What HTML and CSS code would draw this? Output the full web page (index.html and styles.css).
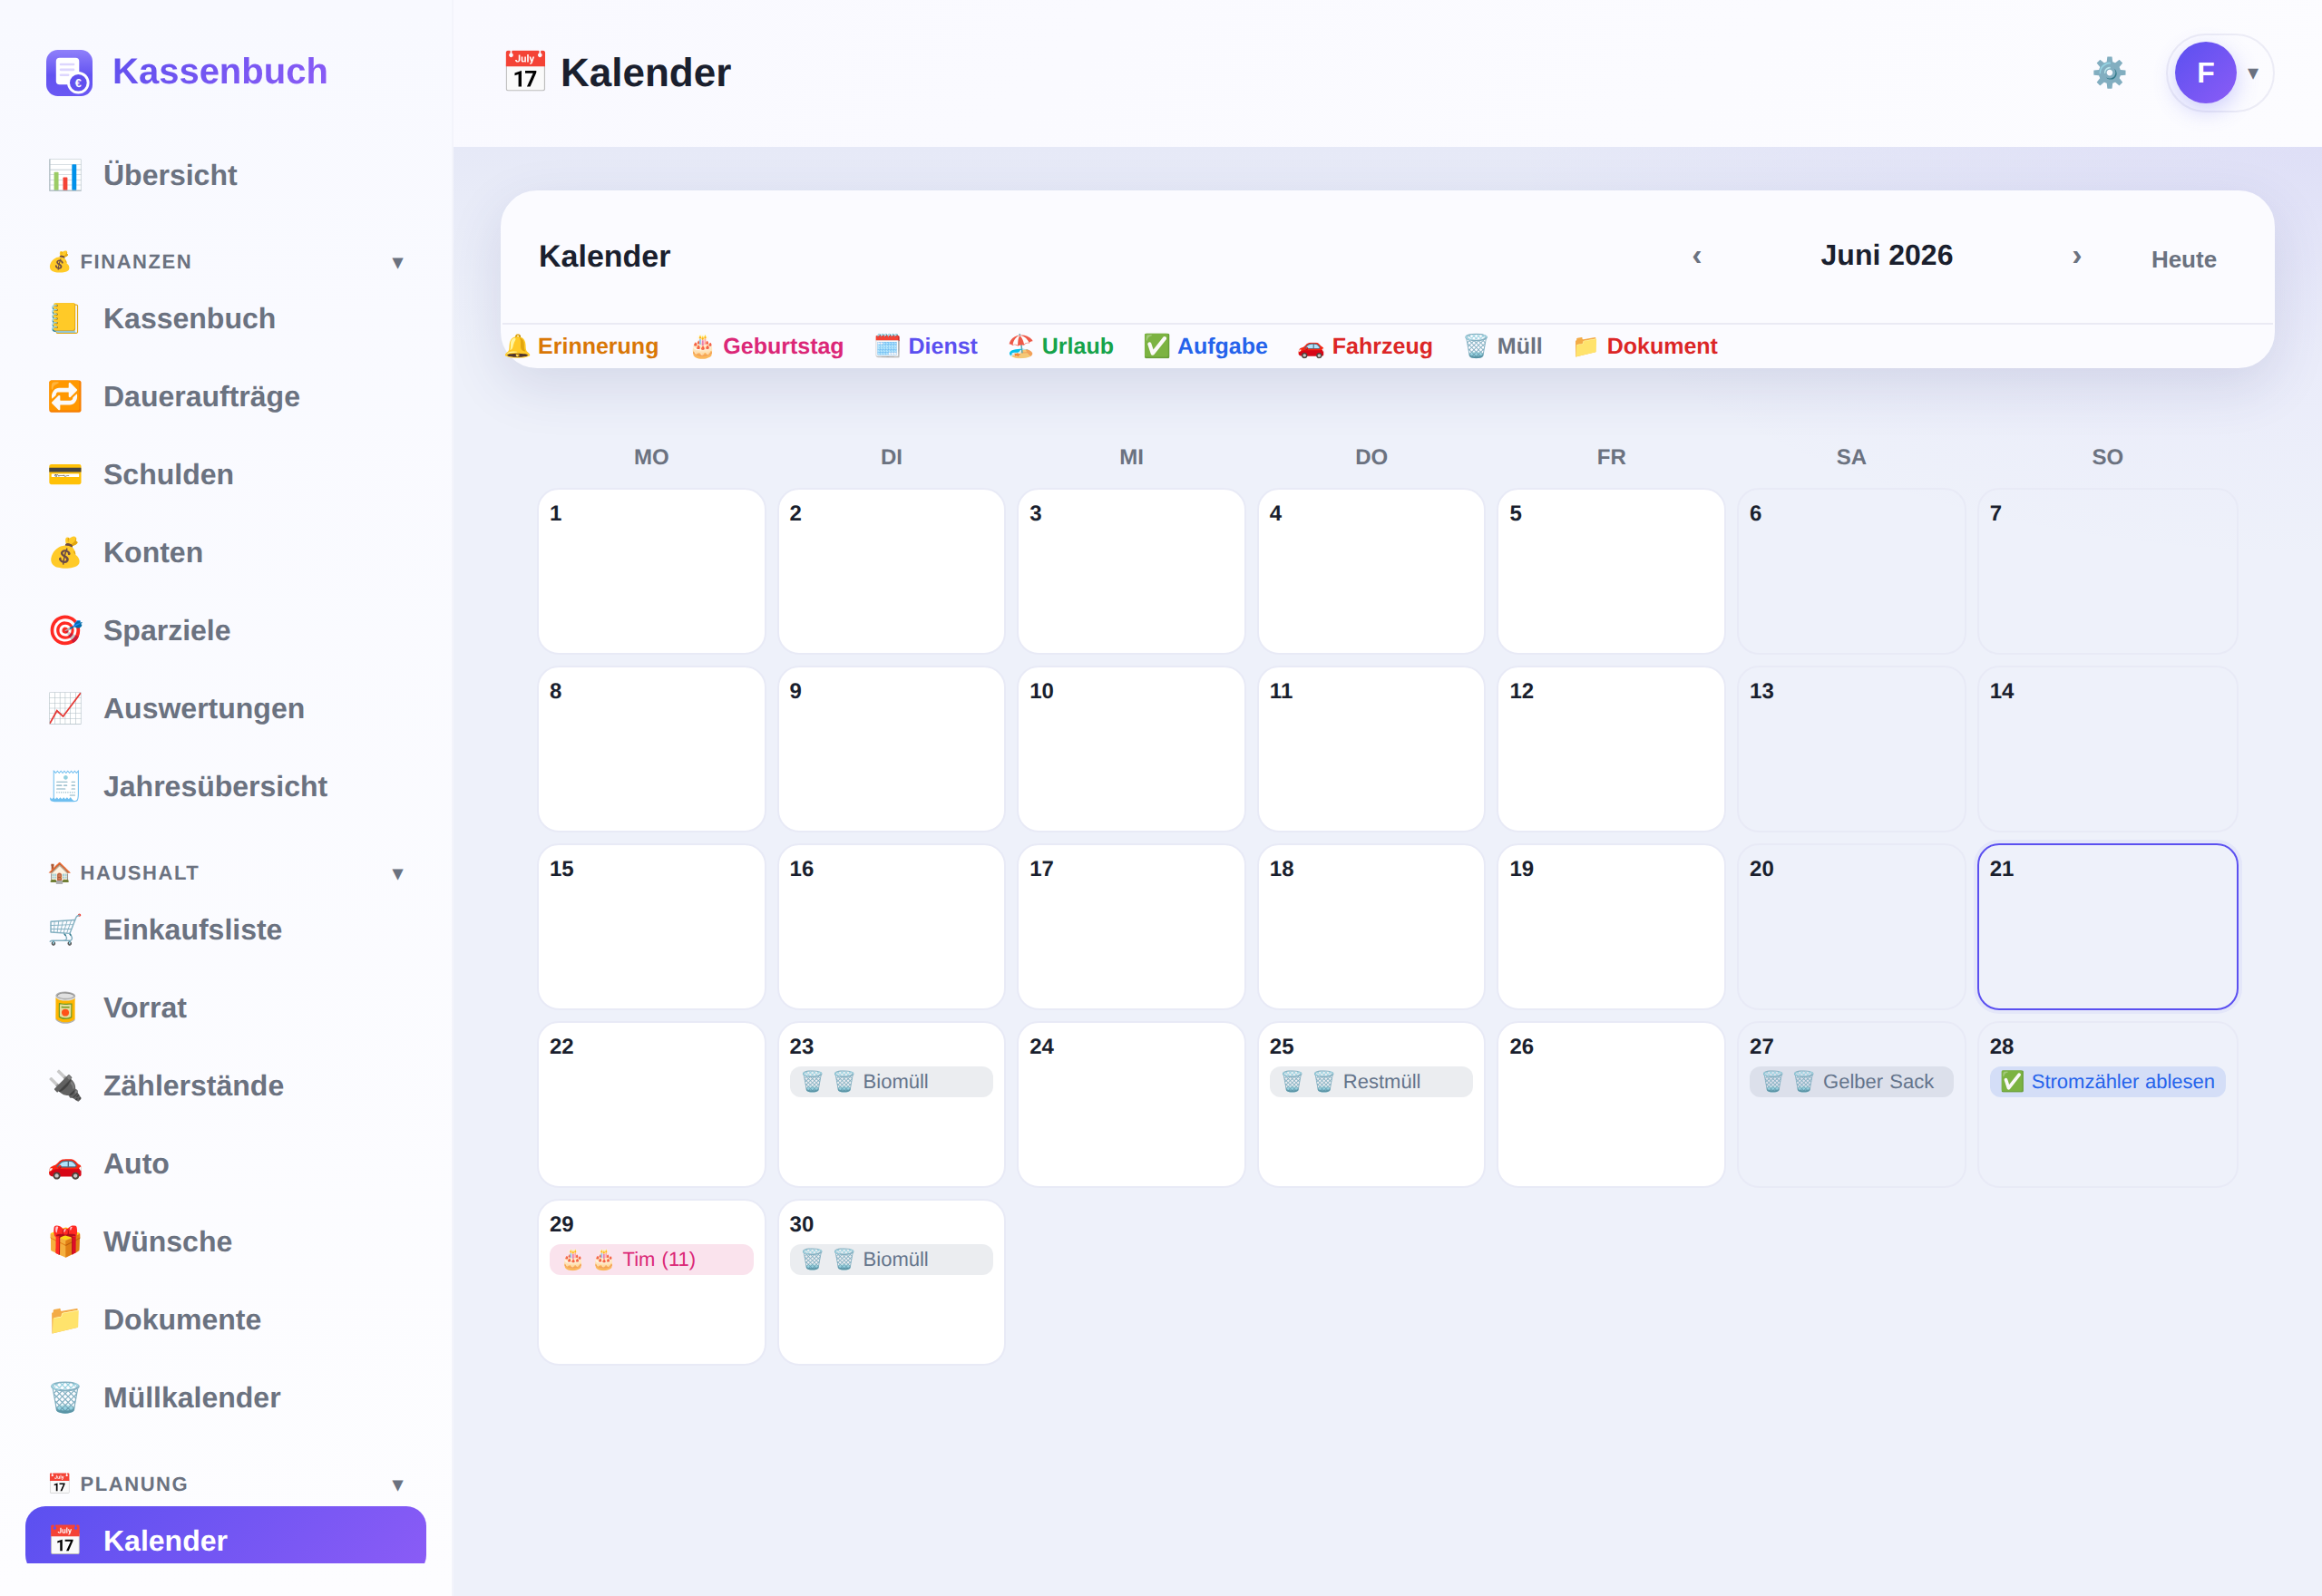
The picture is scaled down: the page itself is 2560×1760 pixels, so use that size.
FILE: index.html
```html
<!DOCTYPE html>
<html lang="de">
<head>
    <title>Kassenbuch - Kalender</title>
    <link rel="stylesheet" href="styles.css">
</head>
<body>
    <div class="app">
        <aside class="sidebar">
            <div class="brand">
                <svg class="logo" viewBox="0 0 52 52" aria-hidden="true">
                    <defs>
                        <linearGradient id="logoFill" x1="0" y1="0" x2="0" y2="1">
                            <stop offset="0" stop-color="#8f80fa"/>
                            <stop offset="0.55" stop-color="#6353f1"/>
                            <stop offset="1" stop-color="#6a58f3"/>
                        </linearGradient>
                    </defs>
                    <rect width="52" height="52" rx="13" fill="url(#logoFill)"/>
                    <rect x="11" y="9" width="26" height="30" rx="4" fill="#fff"/>
                    <rect x="15" y="15" width="17" height="2.6" rx="1.3" fill="#ddd6fe"/>
                    <rect x="15" y="21" width="17" height="2.6" rx="1.3" fill="#ddd6fe"/>
                    <rect x="15" y="27" width="11" height="2.6" rx="1.3" fill="#ddd6fe"/>
                    <circle cx="36" cy="37" r="12.5" fill="#fff"/>
                    <circle cx="36" cy="37" r="9.5" fill="#6050ee"/>
                    <text x="36" y="41.5" class="logo-euro" text-anchor="middle">€</text>
                </svg>
                <span class="brand-name">Kassenbuch</span>
            </div>

            <nav class="nav">
                <a class="nav-item"><span class="nav-icon">📊</span>Übersicht</a>

                <div class="nav-section"><span>💰 FINANZEN</span><span class="caret">▾</span></div>
                <a class="nav-item"><span class="nav-icon">📒</span>Kassenbuch</a>
                <a class="nav-item"><span class="nav-icon">🔁</span>Daueraufträge</a>
                <a class="nav-item"><span class="nav-icon">💳</span>Schulden</a>
                <a class="nav-item"><span class="nav-icon">💰</span>Konten</a>
                <a class="nav-item"><span class="nav-icon">🎯</span>Sparziele</a>
                <a class="nav-item"><span class="nav-icon">📈</span>Auswertungen</a>
                <a class="nav-item"><span class="nav-icon">🧾</span>Jahresübersicht</a>

                <div class="nav-section"><span>🏠 HAUSHALT</span><span class="caret">▾</span></div>
                <a class="nav-item"><span class="nav-icon">🛒</span>Einkaufsliste</a>
                <a class="nav-item"><span class="nav-icon">🥫</span>Vorrat</a>
                <a class="nav-item"><span class="nav-icon">🔌</span>Zählerstände</a>
                <a class="nav-item"><span class="nav-icon">🚗</span>Auto</a>
                <a class="nav-item"><span class="nav-icon">🎁</span>Wünsche</a>
                <a class="nav-item"><span class="nav-icon">📁</span>Dokumente</a>
                <a class="nav-item"><span class="nav-icon">🗑️</span>Müllkalender</a>

                <div class="nav-section"><span>📅 PLANUNG</span><span class="caret">▾</span></div>
                <a class="nav-item active"><span class="nav-icon">📅</span>Kalender</a>
            </nav>
        </aside>

        <div class="main">
            <header class="topbar">
                <h1>📅 Kalender</h1>
                <div class="topbar-right">
                    <span class="gear">⚙️</span>
                    <div class="user-menu">
                        <span class="avatar">F</span>
                        <span class="user-caret">▾</span>
                    </div>
                </div>
            </header>

            <div class="content">
                <section class="cal-card">
                    <div class="cal-head">
                        <h2>Kalender</h2>
                        <div class="cal-nav">
                            <button class="nav-btn">‹</button>
                            <span class="cal-month">Juni 2026</span>
                            <button class="nav-btn">›</button>
                            <button class="today-btn">Heute</button>
                        </div>
                    </div>
                    <div class="legend">
                        <span class="c-reminder">🔔 Erinnerung</span>
                        <span class="c-birthday">🎂 Geburtstag</span>
                        <span class="c-duty">🗓️ Dienst</span>
                        <span class="c-holiday">🏖️ Urlaub</span>
                        <span class="c-task">✅ Aufgabe</span>
                        <span class="c-car">🚗 Fahrzeug</span>
                        <span class="c-waste">🗑️ Müll</span>
                        <span class="c-doc">📁 Dokument</span>
                    </div>
                </section>

                <section class="cal-grid">
                    <div class="weekday">MO</div>
                    <div class="weekday">DI</div>
                    <div class="weekday">MI</div>
                    <div class="weekday">DO</div>
                    <div class="weekday">FR</div>
                    <div class="weekday">SA</div>
                    <div class="weekday">SO</div>

                    <div class="day"><div class="num">1</div></div>
                    <div class="day"><div class="num">2</div></div>
                    <div class="day"><div class="num">3</div></div>
                    <div class="day"><div class="num">4</div></div>
                    <div class="day"><div class="num">5</div></div>
                    <div class="day weekend"><div class="num">6</div></div>
                    <div class="day weekend"><div class="num">7</div></div>

                    <div class="day"><div class="num">8</div></div>
                    <div class="day"><div class="num">9</div></div>
                    <div class="day"><div class="num">10</div></div>
                    <div class="day"><div class="num">11</div></div>
                    <div class="day"><div class="num">12</div></div>
                    <div class="day weekend"><div class="num">13</div></div>
                    <div class="day weekend"><div class="num">14</div></div>

                    <div class="day"><div class="num">15</div></div>
                    <div class="day"><div class="num">16</div></div>
                    <div class="day"><div class="num">17</div></div>
                    <div class="day"><div class="num">18</div></div>
                    <div class="day"><div class="num">19</div></div>
                    <div class="day weekend"><div class="num">20</div></div>
                    <div class="day weekend today"><div class="num">21</div></div>

                    <div class="day"><div class="num">22</div></div>
                    <div class="day"><div class="num">23</div><div class="chip chip-waste">🗑️ 🗑️ Biomüll</div></div>
                    <div class="day"><div class="num">24</div></div>
                    <div class="day"><div class="num">25</div><div class="chip chip-waste">🗑️ 🗑️ Restmüll</div></div>
                    <div class="day"><div class="num">26</div></div>
                    <div class="day weekend"><div class="num">27</div><div class="chip chip-waste">🗑️ 🗑️ Gelber Sack</div></div>
                    <div class="day weekend"><div class="num">28</div><div class="chip chip-task">✅ Stromzähler ablesen</div></div>

                    <div class="day"><div class="num">29</div><div class="chip chip-birthday">🎂 🎂 Tim (11)</div></div>
                    <div class="day"><div class="num">30</div><div class="chip chip-waste">🗑️ 🗑️ Biomüll</div></div>
                </section>
            </div>
        </div>
    </div>
</body>
</html>
```

FILE: styles.css
```css
* { box-sizing: border-box; }
html, body { height: 100%; }
body {
    margin: 0;
    font-family: "Liberation Sans", Arial, sans-serif;
    text-rendering: geometricPrecision;
    color: #1a1f2e;
    background: #eef1fa;
    overflow: hidden;
}
.app { display: flex; height: 1760px; }

/* Sidebar */
.sidebar {
    width: 500px;
    flex: none;
    display: flex;
    flex-direction: column;
    padding-bottom: 36px;
    background: linear-gradient(180deg, #f8f9ff 0%, #fdfdff 100%);
    border-right: 2px solid #f3f4fb;
}
.brand {
    display: flex;
    align-items: center;
    gap: 22px;
    height: 155px;
    flex: none;
    padding: 54px 0 49px 51px;
}
.logo { width: 51px; height: 51px; flex: none; }
.logo-euro { font-size: 13px; font-weight: bold; fill: #fff; }
.brand-name {
    margin-top: -1px;
    font-size: 40px;
    font-weight: bold;
    background: linear-gradient(135deg, #6050ee, #8b5cf6);
    -webkit-background-clip: text;
    background-clip: text;
    color: transparent;
}
.nav { flex: 1; min-height: 0; overflow: hidden; padding: 0 28px; }
.nav-item {
    display: flex;
    align-items: center;
    gap: 22px;
    height: 76px;
    margin-bottom: 10px;
    padding-left: 24px;
    border-radius: 22px;
    font-size: 32px;
    font-weight: bold;
    color: #6b7280;
}
.nav-icon { width: 40px; text-align: center; flex: none; }
.nav-item.active {
    color: #fff;
    background: linear-gradient(135deg, #5b50f0, #8b5cf6);
}
.nav-section {
    display: flex;
    justify-content: space-between;
    align-items: center;
    height: 28px;
    margin: 44px 0 10px;
    padding: 0 26px 0 24px;
    font-size: 22px;
    font-weight: bold;
    letter-spacing: 0.07em;
    color: #6b7280;
}
.caret { letter-spacing: 0; }

/* Top bar */
.main { flex: 1; min-width: 0; display: flex; flex-direction: column; }
.topbar {
    height: 162px;
    flex: none;
    display: flex;
    align-items: center;
    justify-content: space-between;
    padding: 0 52px 2px;
    background: linear-gradient(135deg, #f9f9ff, #fcfcff);
}
.topbar h1 { margin: 0; font-size: 44px; font-weight: bold; word-spacing: -1px; }
.topbar-right { display: flex; align-items: center; gap: 42px; }
.gear { font-size: 32px; }
.user-menu {
    display: flex;
    align-items: center;
    gap: 12px;
    height: 87px;
    padding: 0 16px 0 8px;
    border: 2px solid #ececf6;
    border-radius: 44px;
}
.avatar {
    width: 68px;
    height: 68px;
    border-radius: 50%;
    display: flex;
    align-items: center;
    justify-content: center;
    font-size: 32px;
    font-weight: bold;
    color: #fff;
    background: linear-gradient(135deg, #5b50f0, #8b5cf6);
    box-shadow: 0 8px 24px rgba(99, 102, 241, 0.3);
}
.user-caret { font-size: 24px; color: #6b7280; }

/* Calendar */
.content {
    flex: 1;
    padding: 48px 52px 0;
    background:
        radial-gradient(900px 460px at 100% 0, rgba(120, 90, 240, 0.07), transparent),
        linear-gradient(180deg, #e6e9f7 0, #eef1fa 220px);
}
.cal-card {
    background: #fbfbff;
    border: 2px solid #fbfbff;
    border-radius: 40px;
    box-shadow: 0 20px 60px rgba(60, 65, 130, 0.14);
}
.cal-head {
    height: 144px;
    display: flex;
    align-items: center;
    justify-content: space-between;
    padding: 0 38px 1px 40px;
}
.cal-head h2 { margin: 0; font-size: 34px; font-weight: bold; }
.cal-nav { display: flex; align-items: center; }
.nav-btn, .today-btn {
    border: none;
    background: none;
    padding: 0;
    font-family: inherit;
    font-weight: bold;
    color: #6b7280;
}
.nav-btn { width: 72px; font-size: 34px; margin-bottom: 6px; }
.today-btn { width: 120px; margin: 6px 0 0 22px; font-size: 26px; }
.cal-month { width: 347px; margin-bottom: 5px; text-align: center; font-size: 32px; font-weight: bold; }
.legend {
    display: flex;
    align-items: center;
    gap: 32.8px;
    height: 48px;
    padding: 2px 0 0 1px;
    border-top: 2px solid #eaeaf4;
    font-size: 25px;
    font-weight: bold;
}
.c-reminder { color: #d97706; }
.c-birthday { color: #db2777; }
.c-duty { color: #5b50f0; }
.c-holiday { color: #16a34a; }
.c-task { color: #2563eb; }
.c-car { color: #dc2626; }
.c-waste { color: #6b7280; }
.c-doc { color: #dc2626; }

.cal-grid {
    display: grid;
    grid-template-columns: repeat(7, 1fr);
    gap: 12px;
    margin-top: 75px;
    padding: 0 40px;
}
.weekday {
    height: 45px;
    line-height: 47px;
    text-align: center;
    font-size: 24px;
    font-weight: bold;
    color: #6b7280;
}
.day {
    min-height: 184px;
    padding: 12px;
    background: #fff;
    border: 2px solid #e8eaf6;
    border-radius: 24px;
}
.day.weekend { background: transparent; }
.day.today {
    border-color: #5b50f0;
    box-shadow: 0 0 0 4px rgba(99, 102, 241, 0.07);
}
.num { padding-top: 1px; font-size: 24px; font-weight: bold; margin-bottom: 7px; }
.chip {
    height: 34px;
    line-height: 34px;
    padding: 0 12px;
    border-radius: 12px;
    font-size: 22px;
    word-spacing: 1px;
    white-space: nowrap;
}
.chip-waste { color: #64748b; background: rgba(100, 116, 139, 0.13); }
.chip-task { color: #2563eb; background: rgba(37, 99, 235, 0.13); word-spacing: 0.5px; }
.chip-birthday { color: #db2777; background: rgba(219, 39, 119, 0.13); }
```
